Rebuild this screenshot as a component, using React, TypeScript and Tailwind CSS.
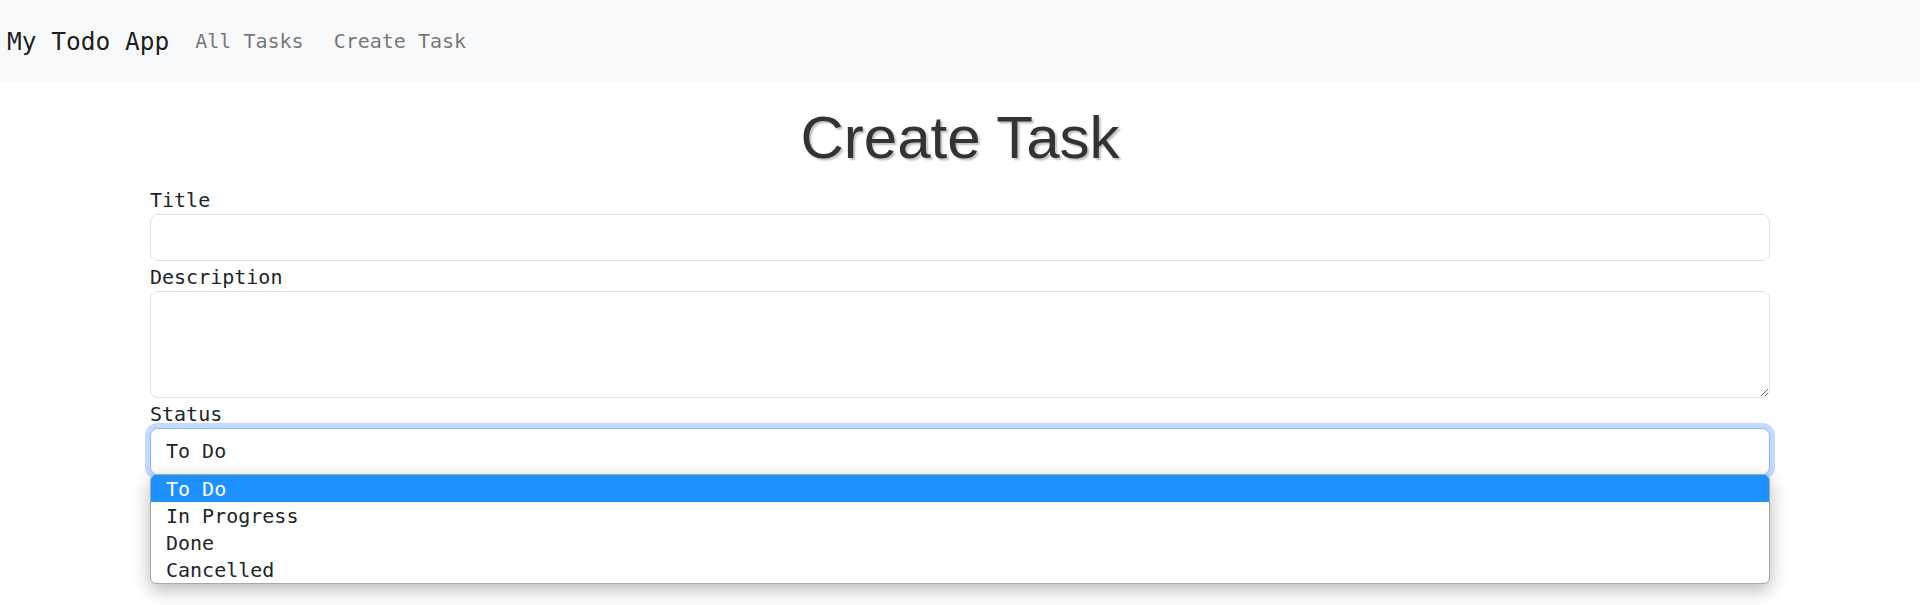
import React from "react";

const mono = "font-['DejaVu_Sans_Mono','Liberation_Mono',monospace]";

export default function App() {
  const options = ["To Do", "In Progress", "Done", "Cancelled"];
  return (
    <div className={`min-h-[605px] bg-white text-[#212529] ${mono}`}>
      <nav className="h-[82px] bg-[#f8f9fa] flex items-center pl-[7px]">
        <span className="text-[24.5px] leading-[37px] text-[rgba(0,0,0,0.9)] mr-[11px]">My Todo App</span>
        <a className="text-[20px] leading-[30px] px-[15px] text-[rgba(0,0,0,0.55)]">All Tasks</a>
        <a className="text-[20px] leading-[30px] px-[15px] text-[rgba(0,0,0,0.55)]">Create Task</a>
      </nav>
      <main className="w-[1620px] mx-auto">
        <h1 className="mt-[20px] mb-[10px] text-center text-[60px] leading-[72px] text-[#333333] font-['Liberation_Sans',Arial,sans-serif] [text-shadow:2px_2px_2px_rgba(0,0,0,0.25)]">
          Create Task
        </h1>
        <form className="flex flex-col">
          <label className="text-[20px] h-[30px] leading-[32px] block">Title</label>
          <input
            type="text"
            className="block w-full h-[47px] border border-[#dee2e6] rounded-[7.5px] px-[15px] text-[20px] outline-none bg-white"
          />
          <label className="text-[20px] h-[30px] leading-[32px] block">Description</label>
          <textarea
            rows={3}
            className="block w-full h-[107px] border border-[#dee2e6] rounded-[7.5px] px-[15px] py-[7.5px] text-[20px] leading-[30px] outline-none resize-y bg-white"
          />
          <label className="text-[20px] h-[30px] leading-[32px] block">Status</label>
          <div className="relative">
            <div className="h-[47px] border border-[#86b7fe] rounded-[7.5px] px-[15px] text-[20px] leading-[45px] bg-white shadow-[0_0_0_5px_rgba(13,110,253,0.25)]">
              To Do
            </div>
            <div className="absolute left-0 right-0 top-[46px] z-10 bg-white border border-[#a8a8a8] rounded-[6px] overflow-hidden shadow-[0_6px_18px_rgba(0,0,0,0.28)]">
              {options.map((o, i) => (
                <div
                  key={o}
                  className={
                    i === 0
                      ? "h-[27px] px-[15px] text-[20px] leading-[28px] bg-[#1e90ff] text-white"
                      : "h-[27px] px-[15px] text-[20px] leading-[28px] text-[#212529]"
                  }
                >
                  {o}
                </div>
              ))}
            </div>
          </div>
        </form>
      </main>
    </div>
  );
}
